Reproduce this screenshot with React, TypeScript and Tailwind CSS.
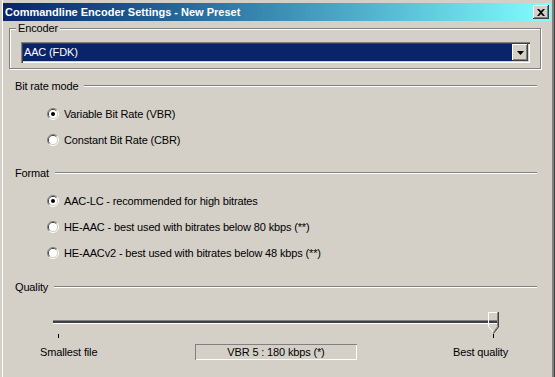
import React from 'react';

function Radio({ checked }: { checked?: boolean }) {
  return (
    <svg width="12" height="12" viewBox="0 0 12 12" className="shrink-0">
      <path d="M2.1 9.9 A5.5 5.5 0 0 1 9.9 2.1" fill="none" stroke="#808080" />
      <path d="M9.9 2.1 A5.5 5.5 0 0 1 2.1 9.9" fill="none" stroke="#ffffff" />
      <path d="M2.8 9.2 A4.5 4.5 0 0 1 9.2 2.8" fill="none" stroke="#404040" />
      <path d="M9.2 2.8 A4.5 4.5 0 0 1 2.8 9.2" fill="none" stroke="#d4d0c8" />
      <circle cx="6" cy="6" r="4" fill="#ffffff" />
      {checked && <circle cx="6" cy="6" r="2" fill="#000000" />}
    </svg>
  );
}

function RadioRow({ label, checked, className }: { label: string; checked?: boolean; className?: string }) {
  return (
    <div className={`flex h-[14px] items-center gap-[5px] pl-[44px] ${className ?? ''}`}>
      <Radio checked={checked} />
      <span>{label}</span>
    </div>
  );
}

function SectionLabel({ label, className }: { label: string; className?: string }) {
  return (
    <div className={`flex h-[14px] items-center gap-[6px] pl-[12px] pr-[14px] ${className ?? ''}`}>
      <span>{label}</span>
      <div className="h-[2px] flex-1 border-t border-b border-t-[#808080] border-b-white" />
    </div>
  );
}

export default function App() {
  return (
    <div className="h-[377px] w-[555px] overflow-hidden bg-[#d4d0c8] font-['Liberation_Sans',Arial,sans-serif] text-[11px] tracking-[-0.15px] text-black">
      <div className="h-full pt-[3px] pl-[3px] pr-[4px] shadow-[inset_2px_0_0_#d4d0c8,inset_3px_0_0_#ffffff,inset_-1px_0_0_#404040,inset_-3px_0_0_#808080]">
        {/* title bar */}
        <div className="flex h-[18px] items-center justify-between bg-gradient-to-r from-[#0a246a] to-[#82ffff] pl-[2px] pr-[2px]">
          <span className="font-bold tracking-normal text-white">Commandline Encoder Settings - New Preset</span>
          <div className="flex h-[14px] w-[16px] items-center justify-center bg-[#d4d0c8] shadow-[inset_-1px_-1px_0_#404040,inset_1px_1px_0_#ffffff,inset_-2px_-2px_0_#808080]">
            <svg width="8" height="7" viewBox="0 0 8 7">
              <path d="M0 0h2l2 2 2-2h2L5 3.5 8 7H6L4 5 2 7H0l3-3.5z" fill="#000" />
            </svg>
          </div>
        </div>

        {/* encoder group */}
        <div className="relative ml-[6px] mt-[7px] h-[41px] w-[532px] border border-[#808080] shadow-[inset_1px_1px_0_#ffffff,1px_1px_0_#ffffff]">
          <span className="absolute -top-[7px] left-[6px] bg-[#d4d0c8] px-[2px] leading-[13px]">Encoder</span>
          <div className="ml-[11px] mt-[13px] flex h-[21px] w-[509px] bg-white p-[2px] shadow-[inset_1px_1px_0_#808080,inset_2px_2px_0_#404040,inset_-1px_-1px_0_#ffffff,inset_-2px_-2px_0_#d4d0c8]">
            <div className="flex flex-1 items-center bg-[#0a246a] pl-[1px] text-white">AAC (FDK)</div>
            <div className="flex w-[16px] items-center justify-center bg-[#d4d0c8] shadow-[inset_-1px_-1px_0_#404040,inset_1px_1px_0_#ffffff,inset_-2px_-2px_0_#808080]">
              <svg width="7" height="4" viewBox="0 0 7 4">
                <path d="M0 0h7L3.5 4z" fill="#000" />
              </svg>
            </div>
          </div>
        </div>

        <SectionLabel label="Bit rate mode" className="mt-[10px]" />
        <RadioRow label="Variable Bit Rate (VBR)" checked className="mt-[14px]" />
        <RadioRow label="Constant Bit Rate (CBR)" className="mt-[12px]" />

        <SectionLabel label="Format" className="mt-[19px]" />
        <RadioRow label="AAC-LC - recommended for high bitrates" checked className="mt-[14px]" />
        <RadioRow label="HE-AAC - best used with bitrates below 80 kbps (**)" className="mt-[12px]" />
        <RadioRow label="HE-AACv2 - best used with bitrates below 48 kbps (**)" className="mt-[12px]" />

        <SectionLabel label="Quality" className="mt-[20px]" />

        {/* slider */}
        <div className="relative ml-[50px] mt-[18px] h-[26px] w-[446px] pt-[8px]">
          <div className="h-[4px] border-t border-b border-t-[#808080] border-b-white bg-[#404040]" />
          <div className="absolute left-[435px] top-0">
            <svg width="11" height="22" viewBox="0 0 11 22">
              <path d="M0.5 14.5V0.5H9.5" fill="none" stroke="#ffffff" />
              <path d="M0.5 14.5 5.5 20.5" fill="none" stroke="#ffffff" />
              <path d="M9.5 0.5V14.5L5.5 20.5" fill="none" stroke="#808080" />
              <path d="M10.5 0V15L5.5 21.5" fill="none" stroke="#404040" />
            </svg>
          </div>
          <div className="absolute left-[5px] top-[22px] h-[4px] w-[1px] bg-black" />
          <div className="absolute left-[440px] top-[22px] h-[4px] w-[1px] bg-black" />
        </div>

        {/* labels */}
        <div className="mt-[6px] flex h-[16px] items-center">
          <span className="ml-[37px] w-[155px]">Smallest file</span>
          <div className="flex h-[16px] w-[162px] items-center justify-center shadow-[inset_1px_1px_0_#808080,inset_-1px_-1px_0_#ffffff]">
            VBR 5 : 180 kbps (*)
          </div>
          <span className="ml-[96px]">Best quality</span>
        </div>
      </div>
    </div>
  );
}
